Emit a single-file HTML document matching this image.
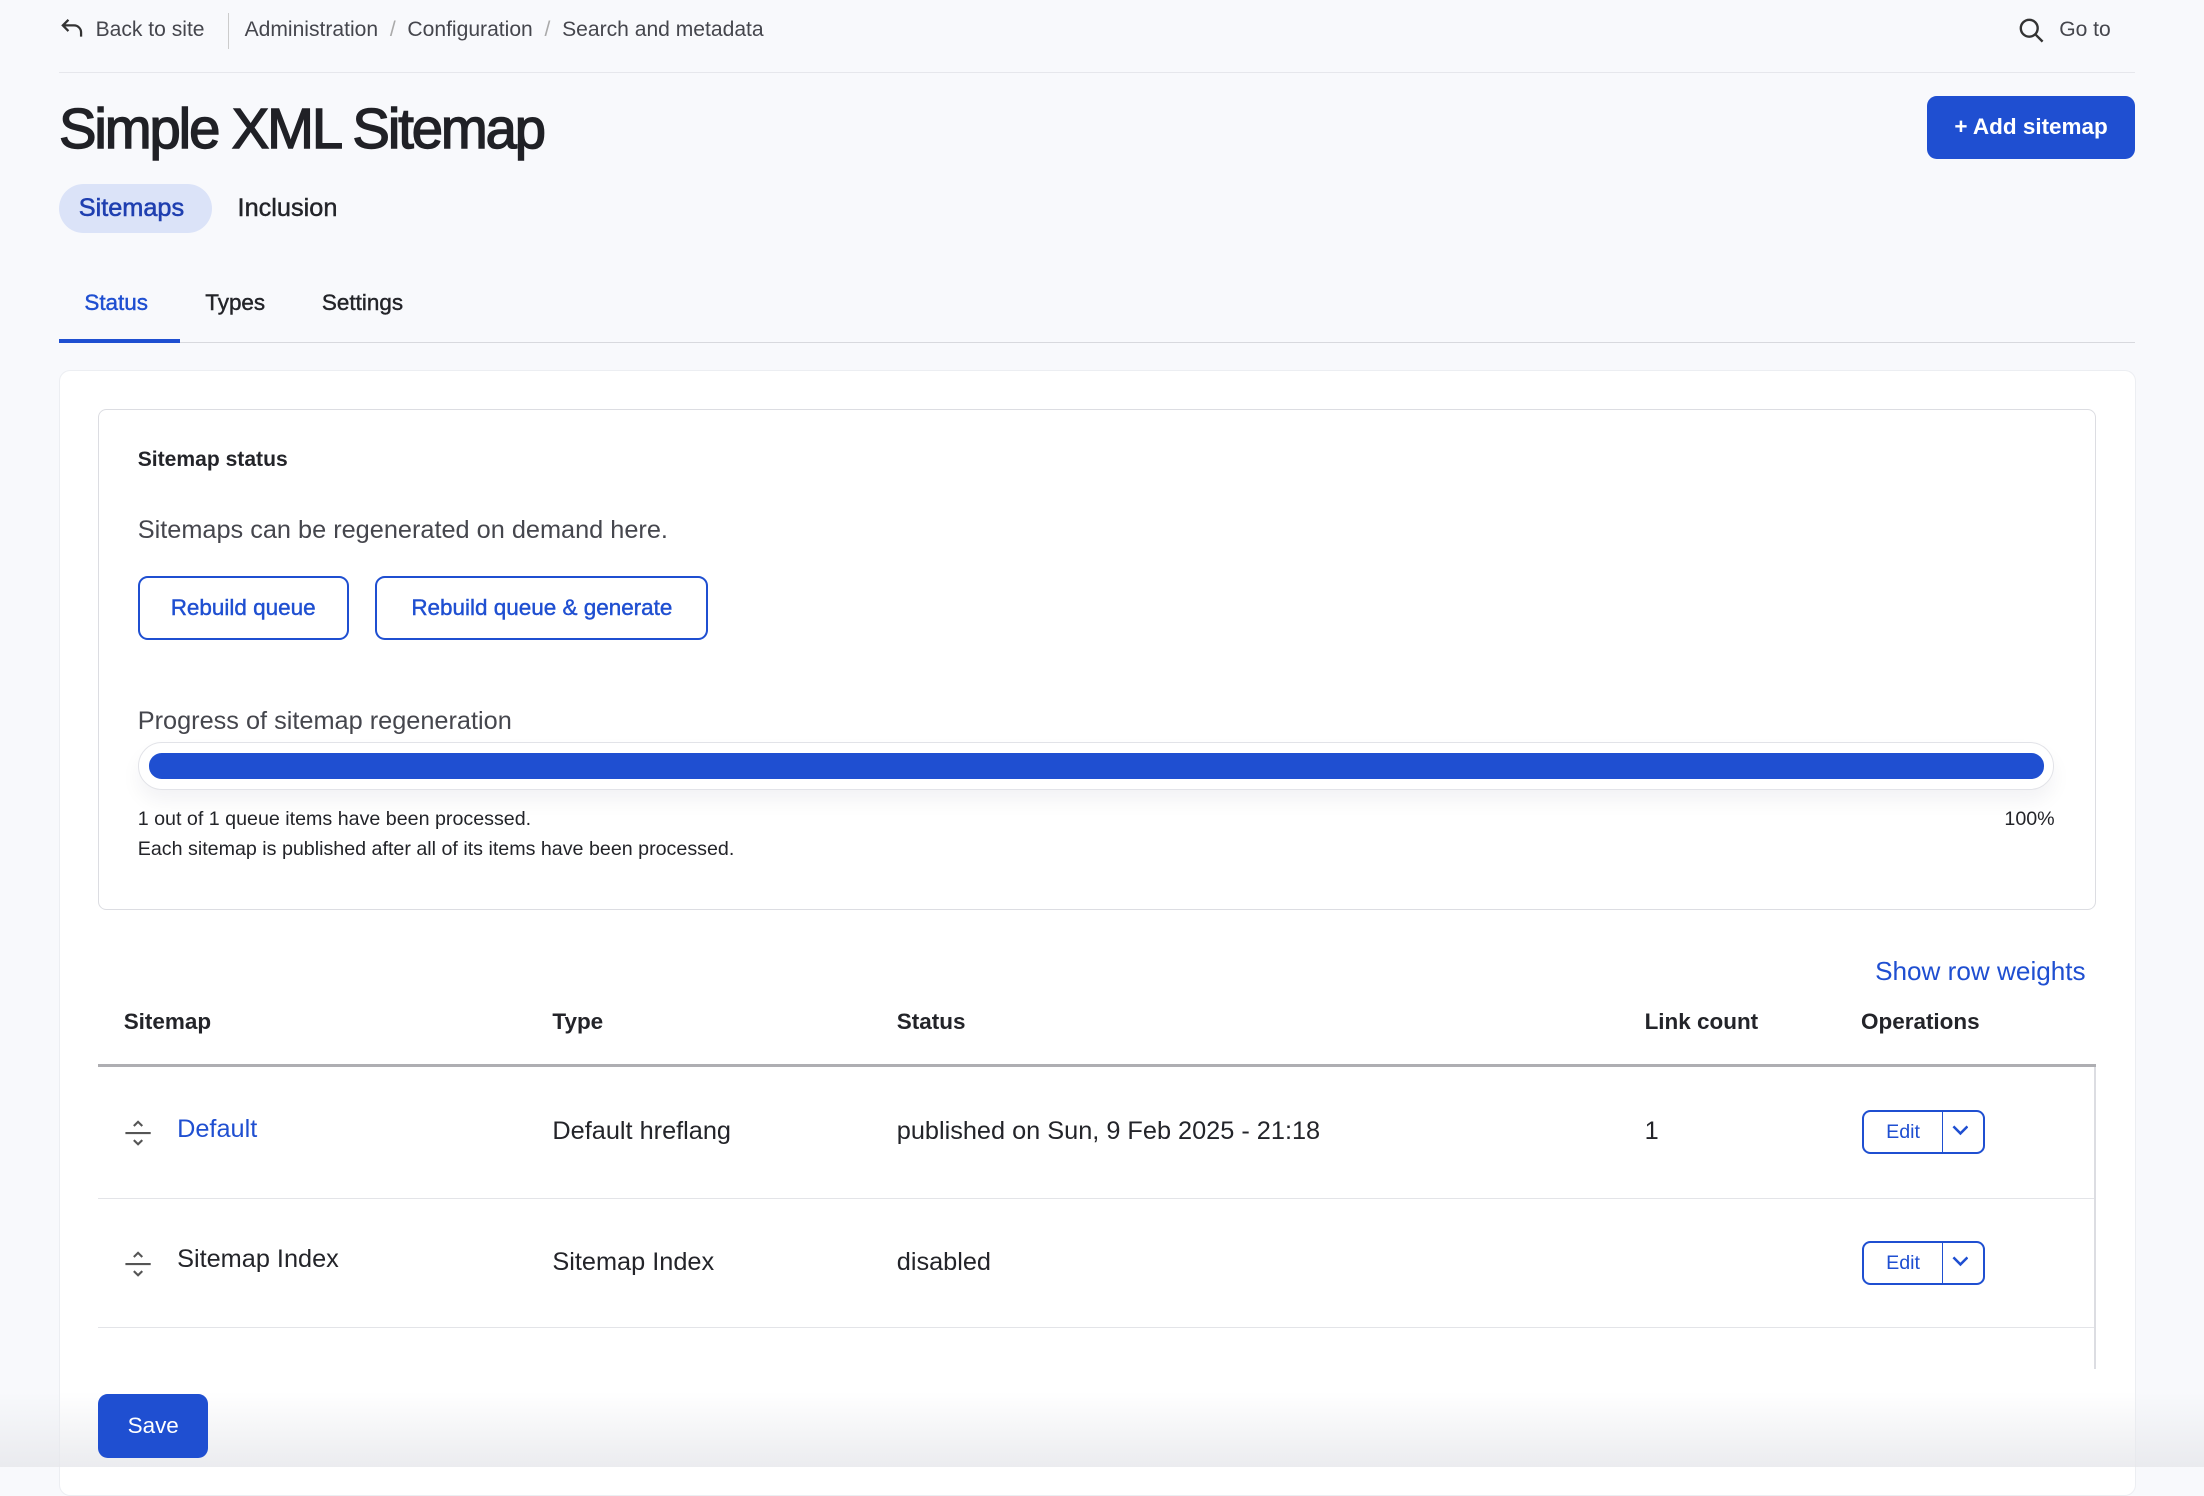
<!DOCTYPE html>
<html><head><meta charset="utf-8"><style>
html{zoom:1.40561}
body{margin:0;width:1568px;height:1044px;background:#f8f9fc;font-family:"Liberation Sans",sans-serif;color:#232429;position:relative;overflow:hidden}
.a{position:absolute;white-space:nowrap}
.blue{color:#1f4fd1}
.btn{position:absolute;border:2px solid #1f4fd1;border-radius:7px;color:#1f4fd1;font-size:16px;box-sizing:border-box;display:flex;align-items:center;justify-content:center;background:#fff;-webkit-text-stroke:0.3px #1f4fd1}
.drop{position:absolute;border:2px solid #1f4fd1;border-radius:6px;width:87px;height:31px;box-sizing:border-box;background:#fff}
.drop span{position:absolute;left:0;width:55px;top:6px;text-align:center;color:#1f4fd1;font-size:14px}
.drop i{position:absolute;left:55px;top:0;bottom:0;border-left:1px solid #1f4fd1}
.drop svg{position:absolute;left:62px;top:9px}
</style></head><body>
<svg class="a" style="left:43px;top:12px" width="18" height="16" viewBox="0 0 18 16"><path d="M6 2L2 6l4 4M2 6h8a5 5 0 0 1 5 5v3" fill="none" stroke="#333" stroke-width="1.6"/></svg>
<div class="a" style="left:68px;top:13px;font-size:15px;color:#45464d">Back to site</div>
<div class="a" style="left:162px;top:9px;width:1px;height:26px;background:#ccc"></div>
<div class="a" style="left:174px;top:13px;font-size:15px;color:#45464d">Administration <span style="color:#aaa">&nbsp;/&nbsp;</span> Configuration <span style="color:#aaa">&nbsp;/&nbsp;</span> Search and metadata</div>
<svg class="a" style="left:1436px;top:12px" width="19" height="19" viewBox="0 0 19 19"><circle cx="8" cy="8" r="6" fill="none" stroke="#333" stroke-width="1.7"/><path d="M12.5 12.5l5 5" stroke="#333" stroke-width="1.7"/></svg>
<div class="a" style="left:1465px;top:13px;font-size:15px;color:#45464d">Go to</div>
<div class="a" style="left:42px;top:51px;width:1477px;height:1px;background:#e6e7ec"></div>
<div class="a" style="left:42px;top:68px;font-size:40px;letter-spacing:-1.5px;color:#202126;-webkit-text-stroke:1px #202126">Simple XML Sitemap</div>
<div class="a" style="left:1371px;top:68px;width:148px;height:45px;background:#1f4fd1;border-radius:7px;color:#fff;font-size:16px;font-weight:bold;display:flex;align-items:center;justify-content:center">+ Add sitemap</div>
<div class="a" style="left:42px;top:131px;width:109px;height:35px;background:#dbe3f8;border-radius:18px"></div>
<div class="a blue" style="left:56px;top:138px;font-size:18px;color:#1f3fb0;-webkit-text-stroke:0.4px #1f3fb0">Sitemaps</div>
<div class="a" style="left:169px;top:138px;font-size:18px;-webkit-text-stroke:0.3px #232429">Inclusion</div>
<div class="a blue" style="left:60px;top:206px;font-size:16px;-webkit-text-stroke:0.3px #1f4fd1">Status</div>
<div class="a" style="left:146px;top:206px;font-size:16px;-webkit-text-stroke:0.3px #232429">Types</div>
<div class="a" style="left:229px;top:206px;font-size:16px;-webkit-text-stroke:0.3px #232429">Settings</div>
<div class="a" style="left:42px;top:243px;width:1477px;height:1px;background:#d8d9de"></div>
<div class="a" style="left:42px;top:241px;width:86px;height:3px;background:#1f4fd1"></div>
<div class="a" style="left:42px;top:263px;width:1476px;height:800px;background:#fff;border:1px solid #eceef2;border-radius:8px"></div>
<div class="a" style="left:70px;top:291px;width:1420px;height:355px;border:1px solid #dcdde2;border-radius:6px"></div>
<div class="a" style="left:98px;top:319px;font-size:15px;font-weight:bold">Sitemap status</div>
<div class="a" style="left:98px;top:367px;font-size:18px;color:#45464d">Sitemaps can be regenerated on demand here.</div>
<div class="btn" style="left:98px;top:410px;width:150px;height:45px">Rebuild queue</div>
<div class="btn" style="left:267px;top:410px;width:237px;height:45px">Rebuild queue &amp; generate</div>
<div class="a" style="left:98px;top:503px;font-size:18px;color:#45464d">Progress of sitemap regeneration</div>
<div class="a" style="left:98px;top:528px;width:1363px;height:34px;border:1px solid #e2e3e8;border-radius:17px;box-sizing:border-box;box-shadow:0 8px 14px rgba(0,0,60,.05)"></div>
<div class="a" style="left:106px;top:536px;width:1348px;height:18px;background:#1f4fd1;border-radius:9px"></div>
<div class="a" style="left:98px;top:575px;font-size:14px">1 out of 1 queue items have been processed.</div>
<div class="a" style="left:1426px;top:575px;font-size:14px">100%</div>
<div class="a" style="left:98px;top:596px;font-size:14px">Each sitemap is published after all of its items have been processed.</div>
<div class="a blue" style="left:1334px;top:680px;font-size:18.6px">Show row weights</div>
<div class="a" style="left:88px;top:718px;font-size:16px;font-weight:bold">Sitemap</div>
<div class="a" style="left:393px;top:718px;font-size:16px;font-weight:bold">Type</div>
<div class="a" style="left:638px;top:718px;font-size:16px;font-weight:bold">Status</div>
<div class="a" style="left:1170px;top:718px;font-size:16px;font-weight:bold">Link count</div>
<div class="a" style="left:1324px;top:718px;font-size:16px;font-weight:bold">Operations</div>
<div class="a" style="left:70px;top:757px;width:1421px;height:2px;background:#aeaeb2"></div>
<div class="a" style="left:1490px;top:759px;width:1px;height:215px;background:#dcdde2"></div>
<div class="a" style="left:70px;top:852px;width:1420px;height:1px;background:#e3e4e8"></div>
<div class="a" style="left:70px;top:944px;width:1420px;height:1px;background:#e3e4e8"></div>
<svg class="a" style="left:88px;top:796px" width="20" height="20" viewBox="0 0 20 20"><path d="M7 5l3-3 3 3M7 15l3 3 3-3M1 10h18" fill="none" stroke="#555" stroke-width="1.5"/></svg>
<svg class="a" style="left:88px;top:889px" width="20" height="20" viewBox="0 0 20 20"><path d="M7 5l3-3 3 3M7 15l3 3 3-3M1 10h18" fill="none" stroke="#555" stroke-width="1.5"/></svg>
<div class="a blue" style="left:126px;top:793px;font-size:18px">Default</div>
<div class="a" style="left:393px;top:795px;font-size:18px">Default hreflang</div>
<div class="a" style="left:638px;top:795px;font-size:18px">published on Sun, 9 Feb 2025 - 21:18</div>
<div class="a" style="left:1170px;top:795px;font-size:18px">1</div>
<div class="drop" style="left:1325px;top:790px"><span>Edit</span><i></i><svg width="12" height="8" viewBox="0 0 12 8"><path d="M1 1l5 5 5-5" fill="none" stroke="#1f4fd1" stroke-width="1.8"/></svg></div>
<div class="a" style="left:126px;top:886px;font-size:18px">Sitemap Index</div>
<div class="a" style="left:393px;top:888px;font-size:18px">Sitemap Index</div>
<div class="a" style="left:638px;top:888px;font-size:18px">disabled</div>
<div class="drop" style="left:1325px;top:883px"><span>Edit</span><i></i><svg width="12" height="8" viewBox="0 0 12 8"><path d="M1 1l5 5 5-5" fill="none" stroke="#1f4fd1" stroke-width="1.8"/></svg></div>
<div class="a" style="left:0;top:990px;width:1568px;height:54px;background:linear-gradient(rgba(230,231,235,0),rgba(230,231,235,.8))"></div>
<div class="a" style="left:70px;top:992px;width:78px;height:45px;background:#1f4fd1;border-radius:7px;color:#fff;font-size:16px;display:flex;align-items:center;justify-content:center">Save</div>
</body></html>
